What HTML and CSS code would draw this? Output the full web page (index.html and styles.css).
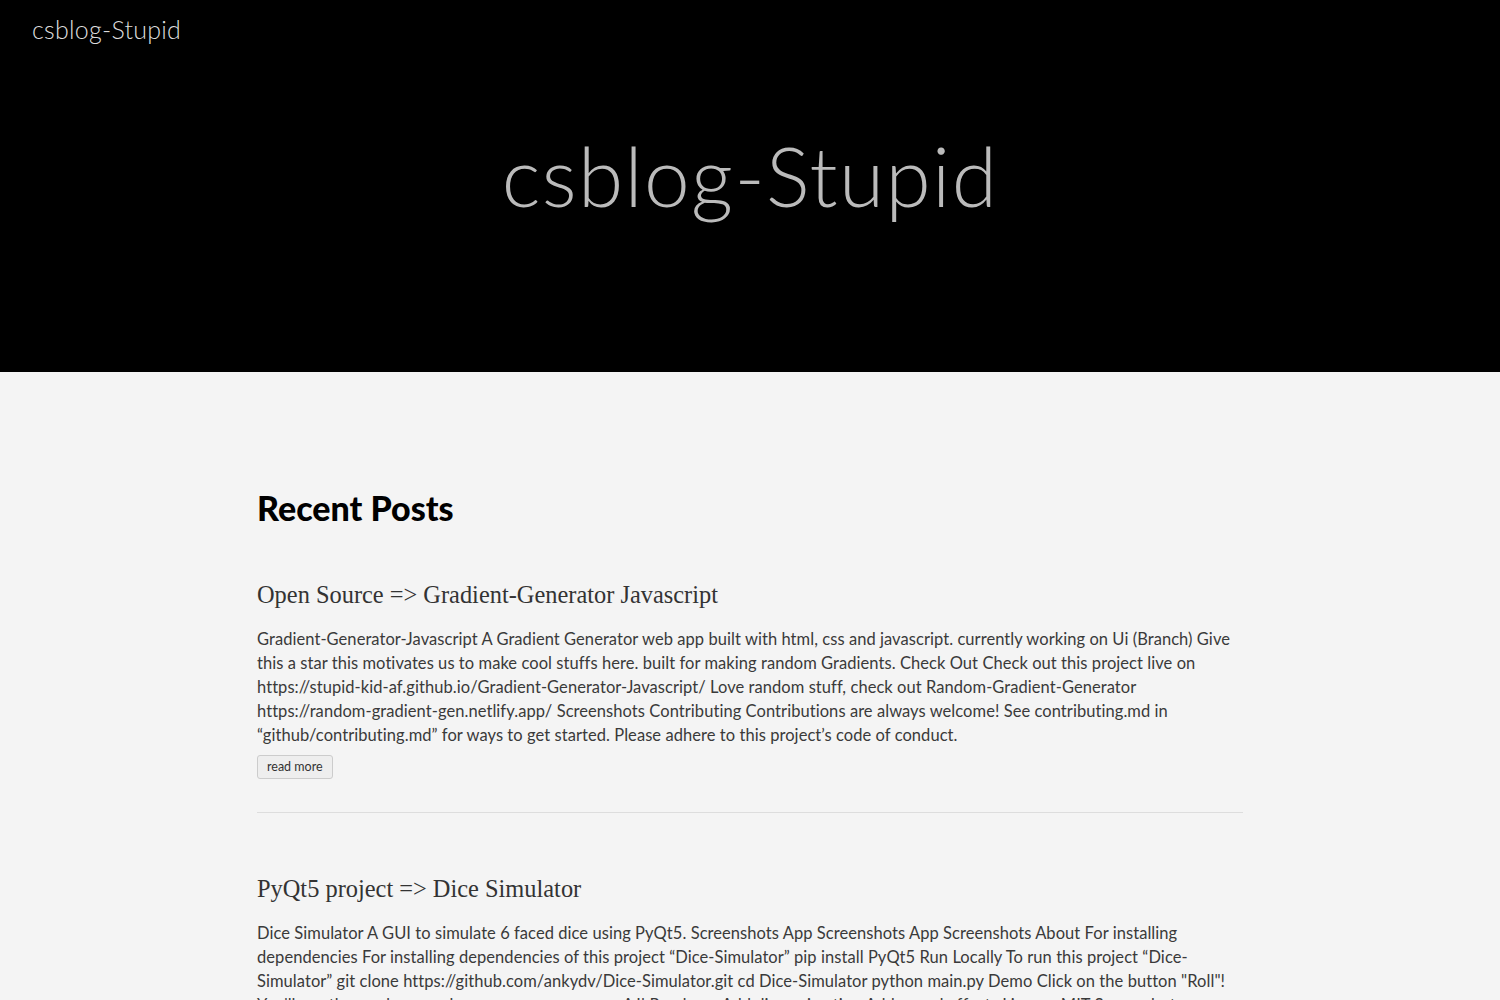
FILE: index.html
```html
<!DOCTYPE html>
<html>
<head>
<meta charset="utf-8">
<link rel="stylesheet" href="styles.css">
</head>
<body>
<header class="hero">
  <nav class="nav"><a class="brand" href="#">csblog-Stupid</a></nav>
  <h1 class="hero-title">csblog-Stupid</h1>
</header>
<main class="content">
  <h2 class="section-title">Recent Posts</h2>
  <article class="post">
    <h3 class="post-title">Open Source =&gt; Gradient-Generator Javascript</h3>
    <p class="post-excerpt">Gradient-Generator-Javascript A Gradient Generator web app built with html, css and javascript. currently working on Ui (Branch) Give this a star this motivates us to make cool stuffs here. built for making random Gradients. Check Out Check out this project live on https://stupid-kid-af.github.io/Gradient-Generator-Javascript/ Love random stuff, check out Random-Gradient-Generator https://random-gradient-gen.netlify.app/ Screenshots Contributing Contributions are always welcome! See contributing.md in “github/contributing.md” for ways to get started. Please adhere to this project’s code of conduct.</p>
    <a class="read-more" href="#">read more</a>
  </article>
  <article class="post">
    <h3 class="post-title">PyQt5 project =&gt; Dice Simulator</h3>
    <p class="post-excerpt">Dice Simulator A GUI to simulate 6 faced dice using PyQt5. Screenshots App Screenshots App Screenshots About For installing dependencies For installing dependencies of this project “Dice-Simulator” pip install PyQt5 Run Locally To run this project “Dice-Simulator” git clone https://github.com/ankydv/Dice-Simulator.git cd Dice-Simulator python main.py Demo Click on the button "Roll"! You'll see the random number come up on screen. AJ! Roadmap Add dice animation Add sound effects License MIT Screenshots</p>
    <a class="read-more" href="#">read more</a>
  </article>
</main>
</body>
</html>
```

FILE: styles.css
```css
html, body {
  margin: 0;
  padding: 0;
}
body {
  background: #f4f4f4;
  font-family: Lato, "Open Sans", "Liberation Sans", sans-serif;
  color: #333;
}
.hero {
  background: #000;
  height: 372px;
  display: flex;
  flex-direction: column;
}
.nav {
  padding: 14px 32px 0;
  height: 37px;
}
.brand {
  color: #ddd;
  font-weight: 300;
  font-size: 25px;
  text-decoration: none;
  letter-spacing: 0.25px;
}
.hero-title {
  margin: 74px 0 0;
  text-align: center;
  color: #bbb;
  font-weight: 300;
  font-size: 82px;
  line-height: 100px;
  letter-spacing: 1.4px;
}
.content {
  width: 986px;
  margin: 0 auto;
  padding-top: 111px;
}
.section-title {
  margin: 0 0 46px;
  font-size: 34px;
  font-weight: 900;
  line-height: 50px;
  color: #000;
}
.post {
  border-bottom: 1px solid #ddd;
  padding-bottom: 33px;
  margin-bottom: 60px;
}
.post-title {
  margin: 0 0 16px;
  font-family: "Liberation Serif", "DejaVu Serif", serif;
  font-weight: 400;
  font-size: 24.4px;
  line-height: 32px;
  color: #333;
}
.post-excerpt {
  margin: 0 0 8px;
  font-size: 16.5px;
  line-height: 24px;
  letter-spacing: 0.06px;
  color: #3a3a3a;
}
.read-more {
  display: inline-block;
  font-size: 12.5px;
  line-height: 22px;
  padding: 0 9px;
  border: 1px solid #ccc;
  border-radius: 3px;
  background: #eee;
  color: #333;
  text-decoration: none;
}
```
